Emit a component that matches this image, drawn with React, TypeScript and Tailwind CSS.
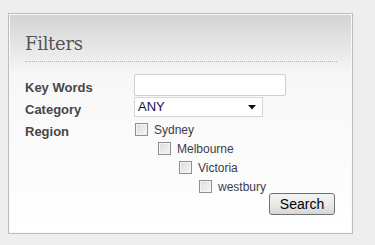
import React from 'react';

const REGIONS = [
  { name: 'Sydney', indent: 'ml-0' },
  { name: 'Melbourne', indent: 'ml-[23px]' },
  { name: 'Victoria', indent: 'ml-[44px]' },
  { name: 'westbury', indent: 'ml-[64px]' },
];

function Check({ label, indent }: { label: string; indent: string }) {
  return (
    <label className={`flex items-center h-[19px] ${indent}`}>
      <span className="w-[13px] h-[13px] border border-[#8f8f8f] bg-gradient-to-br from-[#dcdcdc] to-[#f6f6f6] shadow-[inset_0_0_0_1px_#f4f4f4]" />
      <span className="ml-[6px] text-[12px] text-[#3b3b4d]">{label}</span>
    </label>
  );
}

export default function App() {
  return (
    <div className="w-[375px] h-[245px] bg-[#eeeeee] pt-[13px] pl-[8px] font-['Liberation_Sans',Arial,sans-serif]">
      <div className="w-[345px] h-[221px] border border-[#bdbdbd] bg-gradient-to-b from-[#d3d3d3] via-[#f7f7f7] via-[28%] to-white shadow-[inset_0_0_0_1px_#f8f8f8] px-[16px]">
        {/* Title */}
        <div className="pt-[18px] pb-[5px] border-b border-dotted border-[#b5b5b5] mr-[-1px]">
          <h2 className="font-['DejaVu_Serif','Liberation_Serif',serif] text-[18px] leading-[24px] text-[#555] tracking-[-0.3px]">Filters</h2>
        </div>

        <div className="mt-[12px] flex">
          <div className="w-[109px] text-[13px] font-bold text-[#474747] pt-[3px] leading-[22px]">
            <div>Key Words</div>
            <div>Category</div>
            <div>Region</div>
          </div>
          <div className="flex flex-col">
            <div className="w-[152px] h-[22px] rounded-[2px] border border-[#cfcfcf] bg-white" />
            <div className="mt-[1px] w-[129px] h-[20px] border border-[#d5d5d5] bg-white flex items-center justify-between pl-[3px] pr-[6px]">
              <span className="text-[13px] text-[#10104a]">ANY</span>
              <svg width="8" height="5" viewBox="0 0 8 5"><path d="M0 0h8L4 4.5z" fill="#111" /></svg>
            </div>
            <div className="mt-[3px] ml-[1px]">
              {REGIONS.map((r) => (
                <Check key={r.name} label={r.name} indent={r.indent} />
              ))}
            </div>
          </div>
        </div>

        <div className="flex justify-end mt-[-3px] pr-[1px]">
          <button className="w-[66px] h-[22px] rounded-[3px] border border-[#707070] bg-gradient-to-b from-[#f2f2f2] via-[#ebebeb] via-50% to-[#d6d6d6] text-[14px] text-black leading-none">
            Search
          </button>
        </div>
      </div>
    </div>
  );
}
